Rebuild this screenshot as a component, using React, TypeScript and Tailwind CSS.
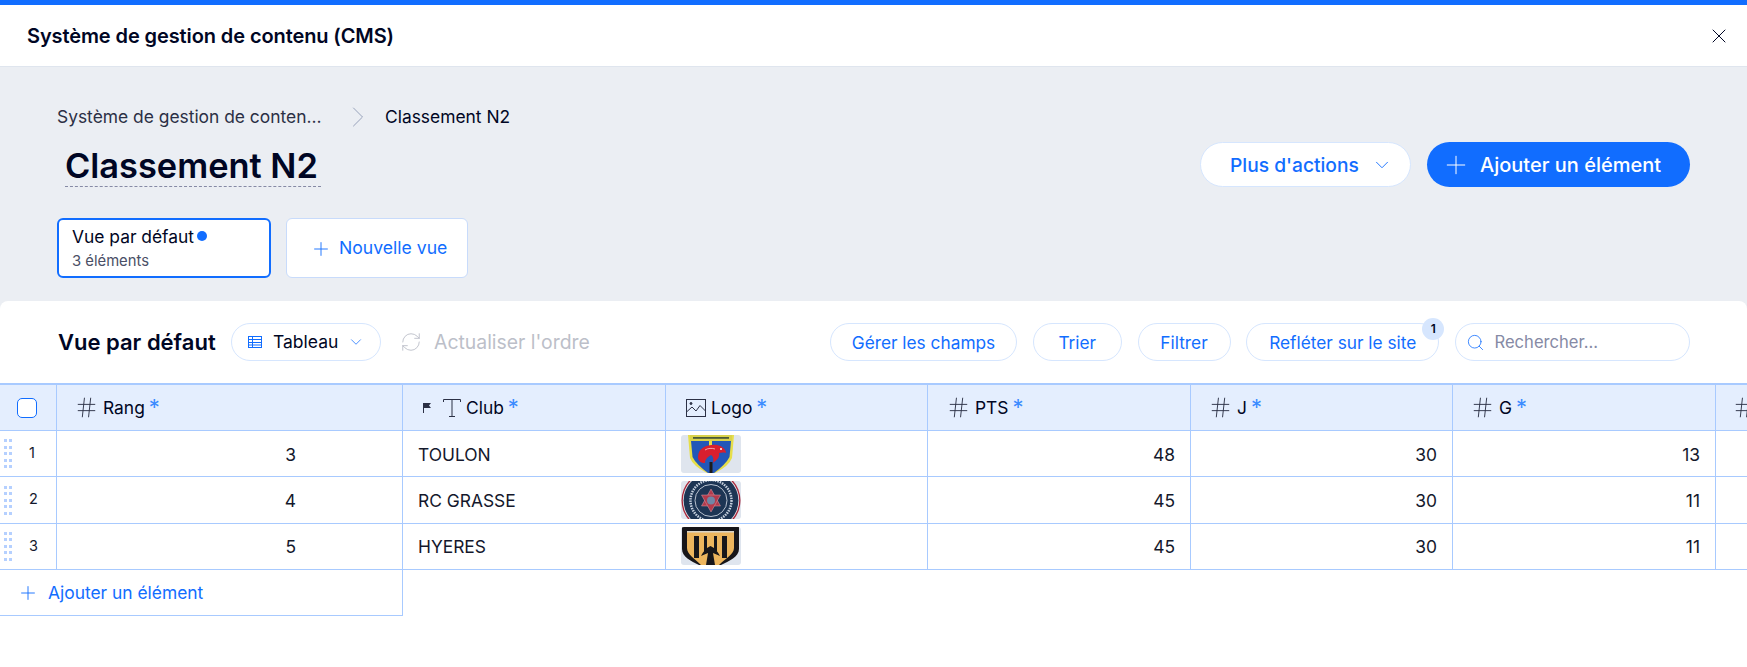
import { ChevronDown, ChevronRight, Hash, Plus, RefreshCw, Search, X } from "lucide-react";

const cols = "grid grid-cols-[57px_346px_263px_262px_263px_262px_263px_300px]";

const Star = () => <span className="ml-[4px] -mt-[1px] text-[22px] leading-none text-[#3b8bff]">*</span>;

const Drag = () => (
    <div className="grid grid-cols-2 gap-x-[2px] gap-y-[3.5px] w-[8px]">
        {Array.from({ length: 10 }).map((_, i) => (
            <span key={i} className="w-[3px] h-[3px] bg-[#b5d0ff]" />
        ))}
    </div>
);

const ToulonLogo = () => (
    <svg viewBox="0 0 60 38" className="w-full h-full">
        <path d="M7 0H53L51 23Q48 31 34 38H26Q12 31 9 23Z" fill="#e6de4a" />
        <path d="M10 6H50L48.500 22Q45 29 33 38H27Q15 29 11.500 22Z" fill="#2257b8" />
        <rect x="9" y="0" width="42" height="6" fill="#d8d24c" />
        <rect x="12" y="2" width="36" height="1.800" fill="#4a5a3a" />
        <rect x="28" y="6" width="3" height="5" fill="#e6de4a" />
        <path d="M17 22C17 12 28 9 36 10C41 11 45 14 45 18C42 17 40 18 38 18C39 22 36 25 32 28C33 24 32 21 30 20C27 22 24 24 24 28C20 28 17 26 17 22Z" fill="#d81f2e" />
        <circle cx="40" cy="14" r="1" fill="#fff" />
        <path d="M24 15C27 13 31 13 34 14" stroke="#fff" strokeWidth="0.600" fill="none" />
        <rect x="28.500" y="27" width="3" height="11" fill="#1c1c1c" />
    </svg>
);

const GrasseLogo = () => (
    <svg viewBox="0 0 60 38" className="w-full h-full">
        <circle cx="30" cy="19.500" r="29.500" fill="#a9273a" />
        <circle cx="30" cy="19.500" r="28.200" fill="#e8e8ee" />
        <circle cx="30" cy="19.500" r="27.400" fill="#1d3554" />
        <circle cx="30" cy="19.500" r="20.500" fill="none" stroke="#c6d0de" strokeWidth="2.500" strokeDasharray="1.500 1" />
        <circle cx="30" cy="19.500" r="16" fill="#1d3554" stroke="#dfe5ee" strokeWidth="0.800" />
        <path d="M30 8L39.500 25H20.500Z" fill="#b23a4c" stroke="#d8a0aa" strokeWidth="0.500" />
        <path d="M30 31L20.500 14H39.500Z" fill="#b23a4c" stroke="#d8a0aa" strokeWidth="0.500" />
        <circle cx="30" cy="19.500" r="4" fill="#6f87a6" />
    </svg>
);

const HyeresLogo = () => (
    <svg viewBox="0 0 60 38" className="w-full h-full">
        <path d="M1 0H58V22C58 30 48 34 40 38H18C10 34 1 30 1 22Z" fill="#17161a" />
        <path d="M6 4H53V21C53 27 45 31 38 38H20C13 31 6 27 6 21Z" fill="#ecb55e" />
        <path d="M13 9H18V31H13ZM41 9H46V31H41ZM23 9H26V24H23ZM33 9H36V24H33Z" fill="#17161a" />
        <path d="M29.500 19C25 21 22 25 20 29L27 26L25 38H34L32 26L39 29C37 25 34 21 29.500 19Z" fill="#17161a" />
        <path d="M6 4H53V5.500H6Z" fill="#d9d4c8" />
    </svg>
);

const rows = [
    { id: 1, rang: 3, club: "TOULON", logo: <ToulonLogo />, pts: 48, j: 30, g: 13 },
    { id: 2, rang: 4, club: "RC GRASSE", logo: <GrasseLogo />, pts: 45, j: 30, g: 11 },
    { id: 3, rang: 5, club: "HYERES", logo: <HyeresLogo />, pts: 45, j: 30, g: 11 },
];

const Pill = ({ label, className }: { label: string; className: string }) => (
    <button className={`h-[38px] pt-[1px] rounded-full border border-[#d6e6fe] bg-white text-[17.3px] text-[#116dff] ${className}`}>{label}</button>
);

const HashIcon = () => <Hash size={25} strokeWidth={0.9} className="text-[#2b3045] mr-[4px]" />;

const HeadLabel = ({ label }: { label: string }) => (
    <>
        <HashIcon />
        <span className="mt-[2px]">{label}</span>
        <Star />
    </>
);

const App = () => {
    return (
        <div className="w-full h-[667px] overflow-hidden bg-white text-[#000624] font-['Inter','Liberation_Sans',sans-serif]">
            <div className="h-[5px] bg-[#116dff]" />
            <div className="h-[62px] flex items-center justify-between pl-[27px] pr-[16px] border-b border-[#dfe5ee]">
                <h1 className="text-[20px] font-semibold tracking-[-0.1px]">Système de gestion de contenu (CMS)</h1>
                <X size={24} strokeWidth={1} />
            </div>

            <div className="h-[234px] bg-[#ebeef3] pt-[39px] pl-[57px] pr-[57px]">
                <div className="flex items-center h-[22px] text-[17.4px]">
                    <span className="w-[265px] whitespace-nowrap text-[#2b3045]">Système de gestion de conten…</span>
                    <ChevronRight size={36} strokeWidth={0.6} className="ml-[18px] text-[#8d99b3]" />
                    <span className="ml-[9px]">Classement N2</span>
                </div>
                <div className="flex items-center justify-between mt-[14px]">
                    <div className="ml-[8px] w-[256px] h-[45px] border-b border-dashed border-[#868aa5] text-[34.4px] leading-[47px] font-semibold whitespace-nowrap">
                        Classement N2
                    </div>
                    <div className="flex items-center gap-[16px]">
                        <button className="w-[211px] h-[45px] pt-[1px] flex items-center pl-[29px] gap-[12px] rounded-full bg-white border border-[#d6e6fe] text-[19.2px] font-medium text-[#116dff]">
                            Plus d'actions
                            <ChevronDown size={22} strokeWidth={1} />
                        </button>
                        <button className="w-[263px] h-[45px] pt-[1px] flex items-center pl-[14px] gap-[9px] rounded-full bg-[#116dff] text-[20px] font-medium text-white whitespace-nowrap">
                            <Plus size={30} strokeWidth={0.8} />
                            Ajouter un élément
                        </button>
                    </div>
                </div>
                <div className="flex gap-[15px] mt-[31px]">
                    <div className="w-[214px] h-[60px] rounded-[6px] border-2 border-[#116dff] bg-white pl-[13px] pt-[5px]">
                        <div className="flex items-center text-[17.4px] leading-[24px]">
                            Vue par défaut
                            <span className="ml-[3px] -mt-[2px] w-[10px] h-[10px] rounded-full bg-[#116dff]" />
                        </div>
                        <div className="mt-[3px] text-[14.8px] leading-[18px] text-[#4a4f66]">3 éléments</div>
                    </div>
                    <button className="w-[182px] h-[60px] pt-[1px] flex items-center pl-[23px] gap-[7px] rounded-[6px] border border-[#c8dbfb] bg-white text-[17.6px] text-[#116dff]">
                        <Plus size={22} strokeWidth={1} />
                        Nouvelle vue
                    </button>
                </div>
            </div>

            <div className="bg-[#ebeef3]">
                <div className="h-[82px] bg-white rounded-t-[8px] flex items-center pl-[58px] pr-[57px]">
                    <h2 className="text-[22px] font-semibold w-[173px] whitespace-nowrap">Vue par défaut</h2>
                    <button className="w-[150px] h-[38px] flex items-center rounded-full border border-[#d6e6fe] pl-[15px] text-[17.5px]">
                        <svg viewBox="0 0 16 16" className="w-[16px] h-[16px] text-[#116dff]" fill="none" stroke="currentColor" strokeWidth="1">
                            <rect x="1.500" y="2.500" width="13" height="11" />
                            <path d="M1.500 5.500H14.500M1.500 8.500H14.500M1.500 11H14.500M5.500 2.500V13.500" />
                        </svg>
                        <span className="ml-[10px] mt-[1px]">Tableau</span>
                        <ChevronDown size={18} strokeWidth={1} className="ml-[9px] text-[#116dff]" />
                    </button>
                    <RefreshCw size={22} strokeWidth={1} className="ml-[19px] text-[#bcbfc9]" />
                    <span className="ml-[12px] mt-[2px] text-[19.4px] text-[#bcbfc9] whitespace-nowrap">Actualiser l'ordre</span>
                    <div className="flex-1" />
                    <div className="flex items-center gap-[15.75px]">
                        <Pill label="Gérer les champs" className="w-[187px]" />
                        <Pill label="Trier" className="w-[89px]" />
                        <Pill label="Filtrer" className="w-[93px]" />
                        <div className="relative">
                            <Pill label="Refléter sur le site" className="w-[193px]" />
                            <span className="absolute -top-[5px] -right-[5px] w-[22px] h-[22px] flex items-center justify-center rounded-full bg-[#d6e6fe] text-[12px] font-semibold">1</span>
                        </div>
                        <div className="w-[235px] h-[38px] flex items-center rounded-full border border-[#d6e6fe] pl-[9.5px] text-[16.6px] text-[#868aa5]">
                            <Search size={19} strokeWidth={1} className="text-[#116dff]" />
                            <span className="ml-[10px] mt-[1px]">Rechercher...</span>
                        </div>
                    </div>
                </div>
            </div>

            <div className="bg-white">
                <div className={`${cols} h-[48px] bg-[#e4eefe] border-t-2 border-b border-[#a8caff] text-[17.4px]`}>
                    <div className="border-r border-[#a8caff] flex items-center justify-center pr-[2px]">
                        <span className="w-[20px] h-[20px] rounded-[5px] border border-[#116dff] bg-white" />
                    </div>
                    <div className="border-r border-[#a8caff] flex items-center pl-[17px]">
                        <HeadLabel label="Rang" />
                    </div>
                    <div className="border-r border-[#a8caff] flex items-center pl-[19px]">
                        <svg viewBox="0 0 10 10" className="w-[10px] h-[10px] text-[#2b3045]" fill="currentColor">
                            <path d="M1 0H9L7 2.500L9 5H2V10H1Z" />
                        </svg>
                        <svg viewBox="0 0 20 20" className="ml-[10px] mr-[4px] w-[20px] h-[20px] text-[#2b3045]" fill="none" stroke="currentColor" strokeWidth="1">
                            <path d="M1.500 4V1.500H18.500V4M10 1.500V18.500M7 18.500H13" />
                        </svg>
                        <span className="mt-[2px]">Club</span>
                        <Star />
                    </div>
                    <div className="border-r border-[#a8caff] flex items-center pl-[20px]">
                        <svg viewBox="0 0 20 20" className="mr-[5px] w-[20px] h-[20px] text-[#2b3045]" fill="none" stroke="currentColor" strokeWidth="1">
                            <rect x="0.500" y="1.500" width="19" height="17" />
                            <path d="M0.500 14L6 9L10 13L14 7.500L19.500 13" />
                            <circle cx="5" cy="5.500" r="1" fill="currentColor" />
                        </svg>
                        <span className="mt-[2px]">Logo</span>
                        <Star />
                    </div>
                    <div className="border-r border-[#a8caff] flex items-center pl-[18px]">
                        <HeadLabel label="PTS" />
                    </div>
                    <div className="border-r border-[#a8caff] flex items-center pl-[17px]">
                        <HeadLabel label="J" />
                    </div>
                    <div className="border-r border-[#a8caff] flex items-center pl-[17px]">
                        <HeadLabel label="G" />
                    </div>
                    <div className="flex items-center pl-[16px]">
                        <HashIcon />
                    </div>
                </div>

                {rows.map((row) => (
                    <div key={row.id} className={`${cols} h-[46.4px] border-b border-[#a8caff] text-[17.4px] text-[#14182c]`}>
                        <div className="border-r border-[#a8caff] flex items-center pl-[4px]">
                            <Drag />
                            <span className="ml-[17px] text-[14.5px] -mt-[2px]">{row.id}</span>
                        </div>
                        <div className="border-r border-[#a8caff] flex items-center justify-end pt-[2px] pr-[106px]">{row.rang}</div>
                        <div className="border-r border-[#a8caff] flex items-center pt-[2px] pl-[15px]">{row.club}</div>
                        <div className="border-r border-[#a8caff] flex items-center pl-[15px]">
                            <div className="w-[60px] h-[38px] rounded-[3px] overflow-hidden bg-[#dfe5ee]">{row.logo}</div>
                        </div>
                        <div className="border-r border-[#a8caff] flex items-center justify-end pt-[2px] pr-[15px]">{row.pts}</div>
                        <div className="border-r border-[#a8caff] flex items-center justify-end pt-[2px] pr-[15px]">{row.j}</div>
                        <div className="border-r border-[#a8caff] flex items-center justify-end pt-[2px] pr-[15px]">{row.g}</div>
                        <div />
                    </div>
                ))}

                <div className="w-[403px] h-[46px] flex items-center pl-[17px] gap-[9px] border-r border-b border-[#a8caff] text-[17.4px] text-[#116dff]">
                    <Plus size={22} strokeWidth={1} />
                    Ajouter un élément
                </div>
            </div>
        </div>
    );
};

export default App;
